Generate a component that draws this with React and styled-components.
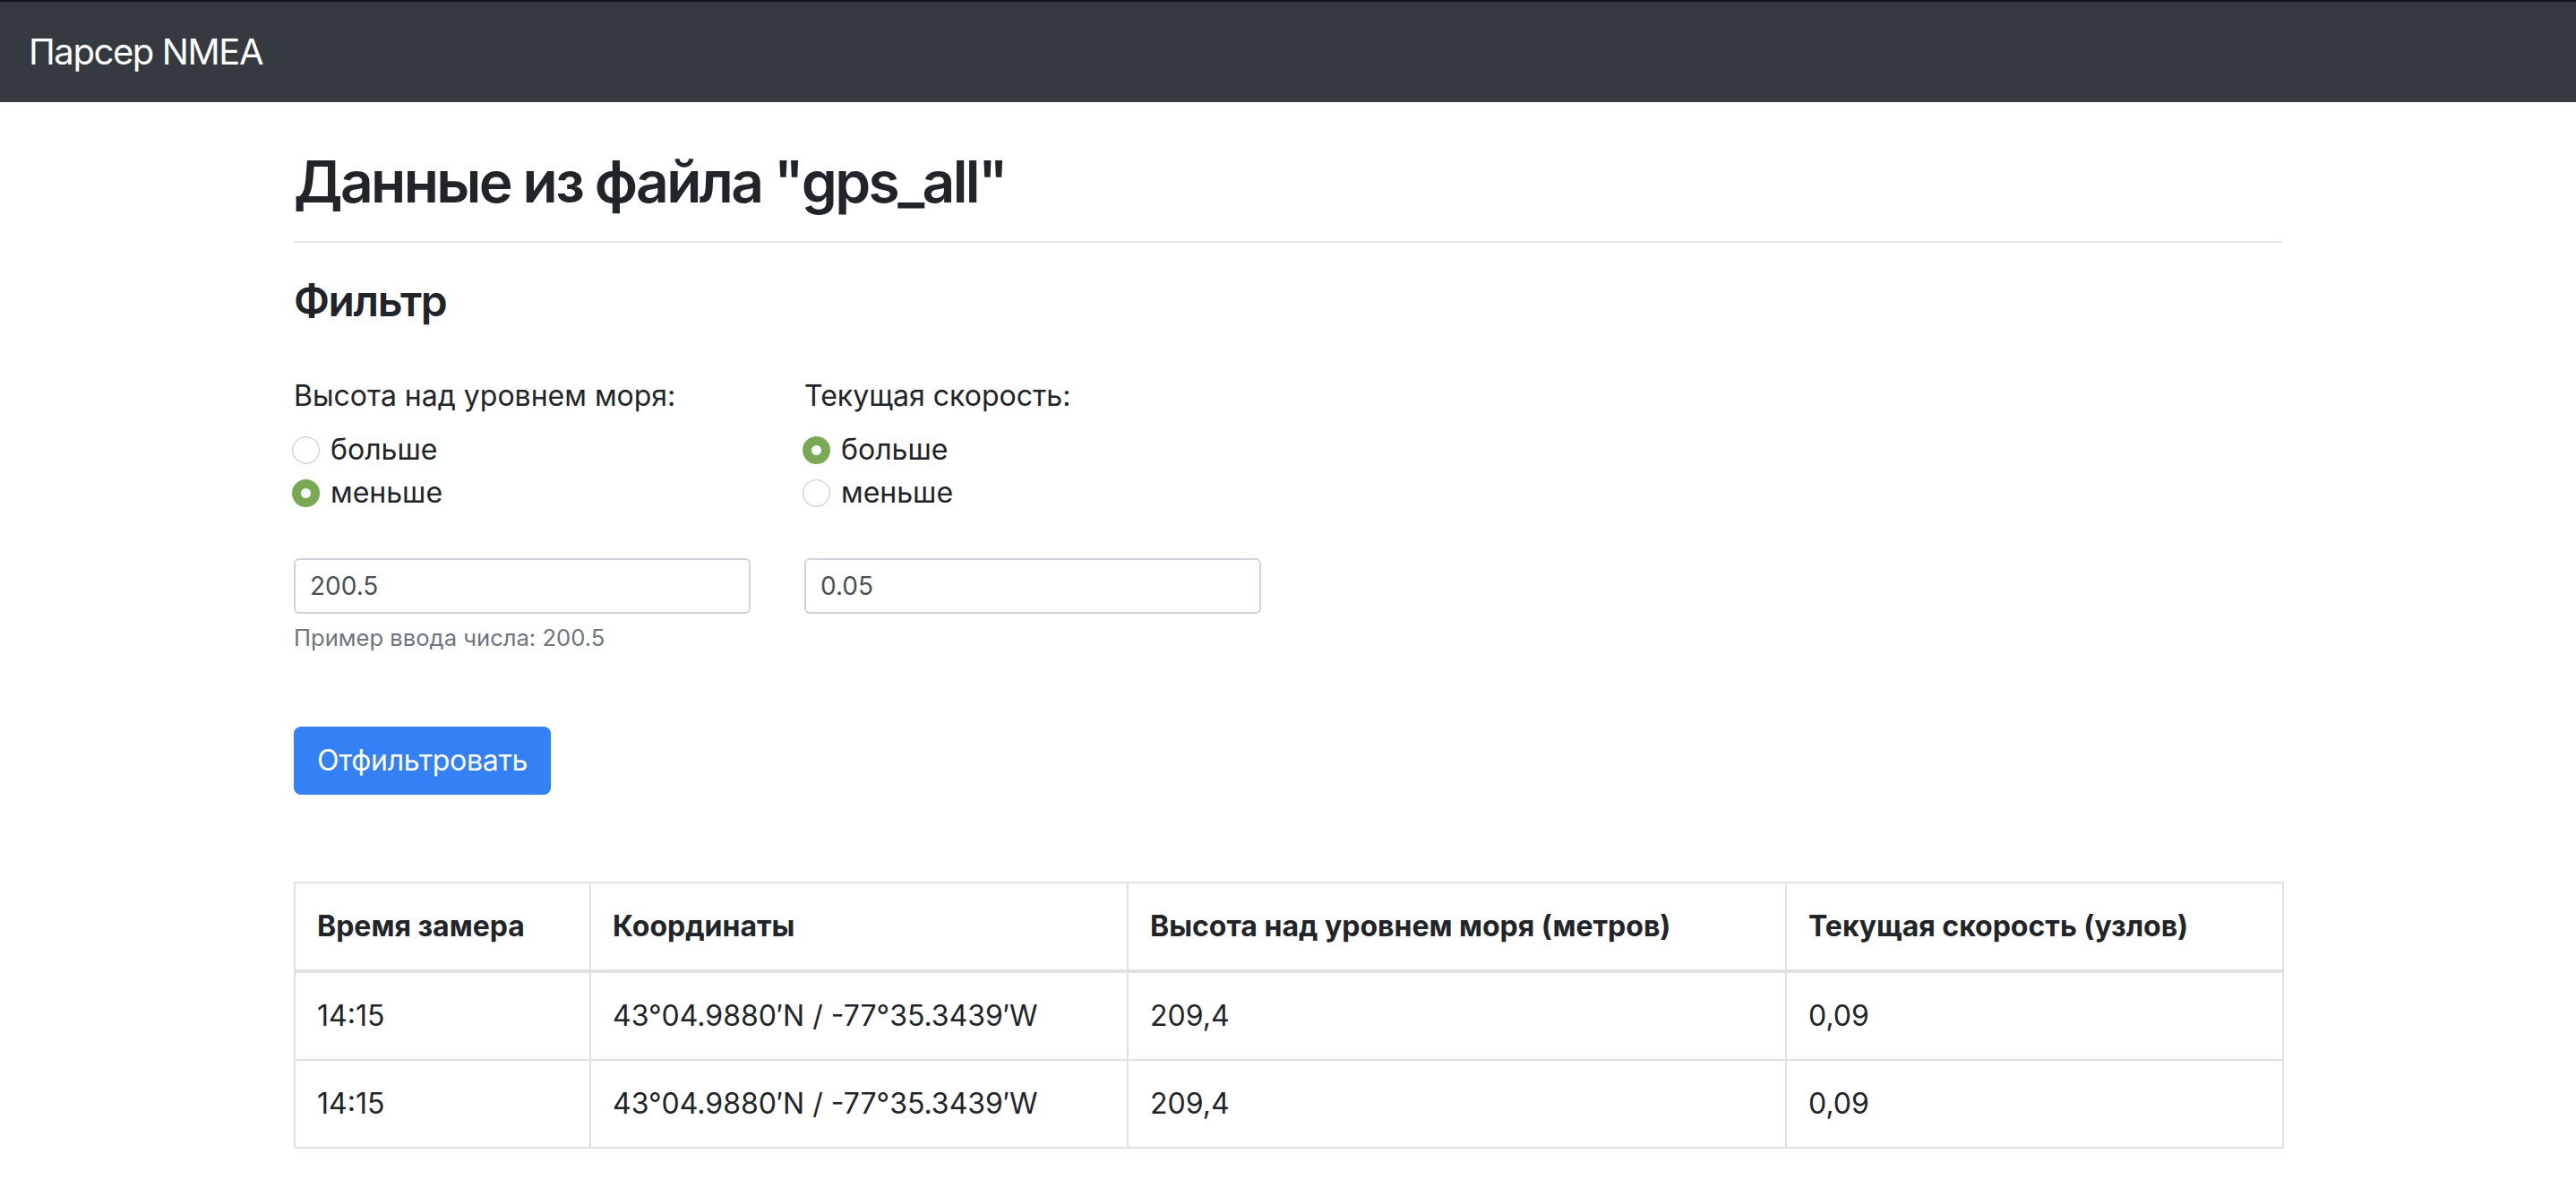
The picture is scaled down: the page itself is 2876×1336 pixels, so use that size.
import React from 'react'
import styled, { createGlobalStyle } from 'styled-components'

const Global = createGlobalStyle`
  html, body {
    margin: 0;
    background: #fff;
  }
  body {
    font-family: Inter, "Noto Sans", "Liberation Sans", sans-serif;
    font-size: 32px;
    line-height: 1.5;
    color: #212529;
  }
  * { box-sizing: border-box; }
`

const Navbar = styled.nav`
  display: flex;
  align-items: center;
  height: 114px;
  padding: 0 32px;
  background: #343a40;
  border-top: 2px solid #131517;
`

const Brand = styled.span`
  font-size: 40px;
  line-height: 60px;
  letter-spacing: -1.4px;
  color: #fff;
  white-space: nowrap;
`

const Container = styled.main`
  width: 2220px;
  margin: 0 auto;
  padding-bottom: 32px;
`

const Title = styled.h2`
  margin: 51px 0 0;
  font-size: 64px;
  font-weight: 600;
  line-height: 1.2;
  letter-spacing: -2.6px;
`

const Rule = styled.hr`
  margin: 27px 0 36px;
  border: 0;
  border-top: 2px solid rgba(0, 0, 0, 0.1);
`

const Subtitle = styled.h4`
  margin: 0;
  font-size: 48px;
  font-weight: 600;
  line-height: 1.2;
  letter-spacing: -1.4px;
`

const FilterForm = styled.form`
  margin-top: 54px;
`

const FieldRow = styled.div`
  display: grid;
  grid-template-columns: 510px 510px;
  column-gap: 60px;
  align-items: start;
`

const Field = styled.div`
  display: flex;
  flex-direction: column;
`

const FieldLabel = styled.div`
  margin-bottom: 12px;
`

const Option = styled.label`
  display: flex;
  align-items: center;
  gap: 12px;
  margin-left: -2px;
  height: 48px;
`

const Radio = styled.span`
  flex: none;
  width: 31px;
  height: 31px;
  border-radius: 50%;
  display: flex;
  align-items: center;
  justify-content: center;
  background: ${p => (p.checked ? '#79aa53' : '#fff')};
  border: ${p => (p.checked ? 'none' : '1.5px solid #c4c4c4')};
  box-shadow: ${p => (p.checked ? 'none' : 'inset 0 -1px 1px rgba(0,0,0,0.06)')};
  &::after {
    content: '';
    display: ${p => (p.checked ? 'block' : 'none')};
    width: 11px;
    height: 11px;
    border-radius: 50%;
    background: #fff;
  }
`

const Input = styled.input`
  margin-top: 49px;
  width: 100%;
  height: 62px;
  padding: 8px 16px;
  font: inherit;
  font-size: 28px;
  line-height: 1.5;
  color: #495057;
  background: #fff;
  border: 2px solid #ced4da;
  border-radius: 6px;
  outline: none;
`

const Hint = styled.small`
  margin-top: 8px;
  font-size: 25.6px;
  line-height: 1.5;
  color: #6c757d;
`

const SubmitButton = styled.button`
  margin-top: 79px;
  height: 76px;
  padding: 0 24px;
  font: inherit;
  font-size: 32px;
  line-height: 1.5;
  letter-spacing: -0.3px;
  color: #fff;
  background: #3480f5;
  border: 2px solid #3480f5;
  border-radius: 8px;
  cursor: pointer;
`

const Table = styled.table`
  margin-top: 97px;
  width: 100%;
  table-layout: fixed;
  border-collapse: collapse;
  border: 2px solid #dee2e6;
`

const Th = styled.th`
  padding: 24px;
  text-align: left;
  font-weight: 700;
  vertical-align: bottom;
  border: 2px solid #dee2e6;
  border-bottom-width: 4px;
  white-space: nowrap;
`

const Td = styled.td`
  padding: 24px;
  vertical-align: top;
  border: 2px solid #dee2e6;
  white-space: nowrap;
`

const columns = [
  { title: 'Время замера', width: 330 },
  { title: 'Координаты', width: 600 },
  { title: 'Высота над уровнем моря (метров)', width: 735 },
  { title: 'Текущая скорость (узлов)', width: 555 },
]

const rows = [
  ['14:15', '43°04.9880′N / -77°35.3439′W', '209,4', '0,09'],
  ['14:15', '43°04.9880′N / -77°35.3439′W', '209,4', '0,09'],
]

const RadioGroup = ({ checked }) => (
  <>
    <Option><Radio checked={checked === 'more'} />больше</Option>
    <Option><Radio checked={checked === 'less'} />меньше</Option>
  </>
)

export default function App() {
  return (
    <>
      <Global />
      <Navbar>
        <Brand>Парсер NMEA</Brand>
      </Navbar>
      <Container>
        <Title>Данные из файла "gps_all"</Title>
        <Rule />
        <Subtitle>Фильтр</Subtitle>
        <FilterForm onSubmit={e => e.preventDefault()}>
          <FieldRow>
            <Field>
              <FieldLabel>Высота над уровнем моря:</FieldLabel>
              <RadioGroup checked="less" />
              <Input defaultValue="200.5" />
              <Hint>Пример ввода числа: 200.5</Hint>
            </Field>
            <Field>
              <FieldLabel>Текущая скорость:</FieldLabel>
              <RadioGroup checked="more" />
              <Input defaultValue="0.05" />
            </Field>
          </FieldRow>
          <SubmitButton type="submit">Отфильтровать</SubmitButton>
        </FilterForm>
        <Table>
          <colgroup>
            {columns.map(c => <col key={c.title} style={{ width: c.width }} />)}
          </colgroup>
          <thead>
            <tr>{columns.map(c => <Th key={c.title}>{c.title}</Th>)}</tr>
          </thead>
          <tbody>
            {rows.map((r, i) => (
              <tr key={i}>{r.map((v, j) => <Td key={j}>{v}</Td>)}</tr>
            ))}
          </tbody>
        </Table>
      </Container>
    </>
  )
}
